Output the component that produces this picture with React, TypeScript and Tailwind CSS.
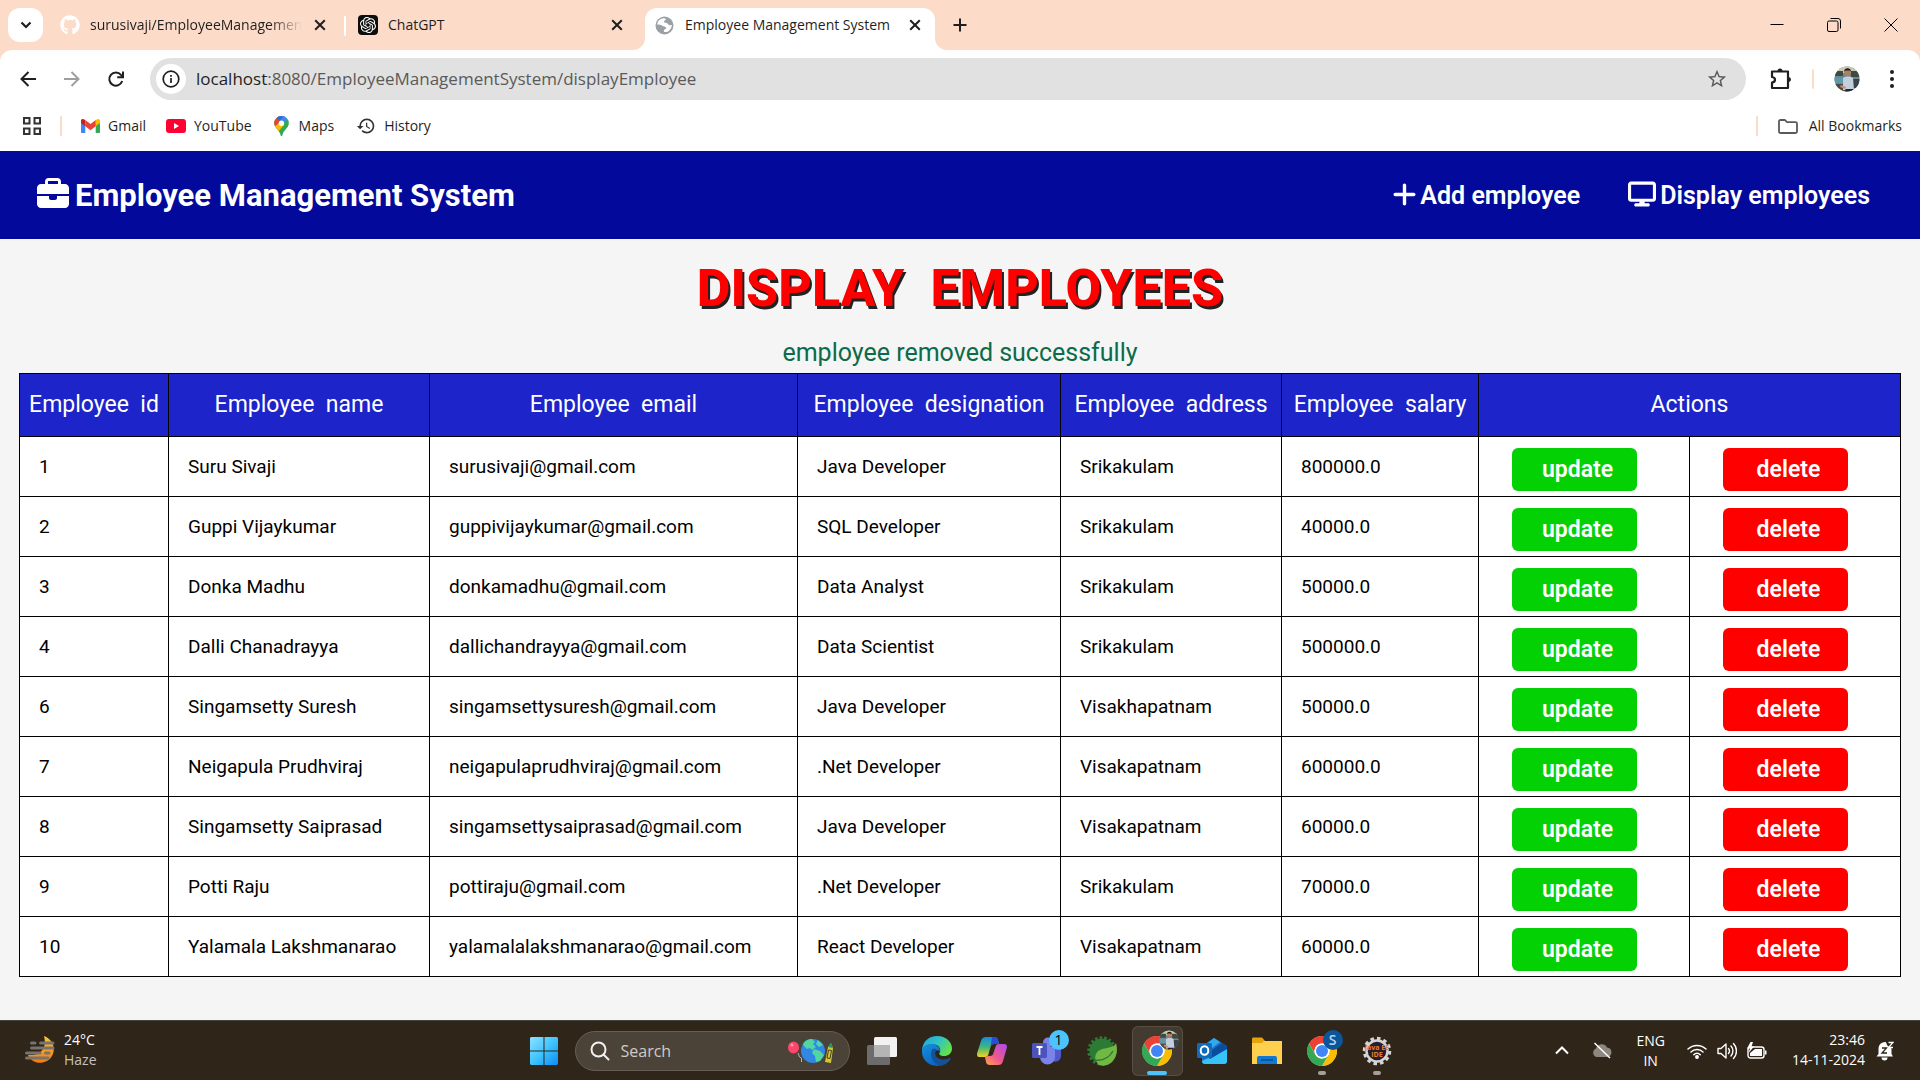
import React from "react";
import { FaBriefcase, FaDisplay, FaGithub, FaPlus } from "react-icons/fa6";
import { SiOpenai } from "react-icons/si";
import { MdHistory, MdStarBorder } from "react-icons/md";

type Employee = {
  id: number;
  name: string;
  email: string;
  designation: string;
  address: string;
  salary: string;
};

const employees: Employee[] = [
  { id: 1, name: "Suru Sivaji", email: "surusivaji@gmail.com", designation: "Java Developer", address: "Srikakulam", salary: "800000.0" },
  { id: 2, name: "Guppi Vijaykumar", email: "guppivijaykumar@gmail.com", designation: "SQL Developer", address: "Srikakulam", salary: "40000.0" },
  { id: 3, name: "Donka Madhu", email: "donkamadhu@gmail.com", designation: "Data Analyst", address: "Srikakulam", salary: "50000.0" },
  { id: 4, name: "Dalli Chanadrayya", email: "dallichandrayya@gmail.com", designation: "Data Scientist", address: "Srikakulam", salary: "500000.0" },
  { id: 6, name: "Singamsetty Suresh", email: "singamsettysuresh@gmail.com", designation: "Java Developer", address: "Visakhapatnam", salary: "50000.0" },
  { id: 7, name: "Neigapula Prudhviraj", email: "neigapulaprudhviraj@gmail.com", designation: ".Net Developer", address: "Visakapatnam", salary: "600000.0" },
  { id: 8, name: "Singamsetty Saiprasad", email: "singamsettysaiprasad@gmail.com", designation: "Java Developer", address: "Visakapatnam", salary: "60000.0" },
  { id: 9, name: "Potti Raju", email: "pottiraju@gmail.com", designation: ".Net Developer", address: "Srikakulam", salary: "70000.0" },
  { id: 10, name: "Yalamala Lakshmanarao", email: "yalamalalakshmanarao@gmail.com", designation: "React Developer", address: "Visakapatnam", salary: "60000.0" },
];

function CloseIcon() {
  return (
    <svg width="12" height="12" viewBox="0 0 12 12" fill="none" stroke="#1f1f1f" strokeWidth="2" aria-hidden="true">
      <path d="M1.2 1.2l9.6 9.6M10.8 1.2L1.2 10.8" />
    </svg>
  );
}

function CloseButton({ label }: { label: string }) {
  return (
    <button type="button" aria-label={label} className="flex size-5 shrink-0 items-center justify-center">
      <CloseIcon />
    </button>
  );
}

function TabStrip() {
  return (
    <div className="flex h-[50px] items-stretch bg-[#fcdbc9]">
      <div className="flex items-center pl-2">
        <button type="button" aria-label="Search tabs" className="flex h-[34px] w-[35px] items-center justify-center rounded-xl bg-white">
          <svg width="12" height="8" viewBox="0 0 12 8" fill="none" stroke="#1f1f1f" strokeWidth="2.2" aria-hidden="true">
            <path d="M1.5 1.5L6 6l4.500-4.500" />
          </svg>
        </button>
      </div>
      <div className="flex w-[301px] items-center pr-[14px] pl-[17px]">
        <FaGithub className="size-5 shrink-0 text-white" aria-hidden="true" />
        <a href="#github" className="ml-[10px] min-w-0 flex-1 [mask-image:linear-gradient(to_right,black_85%,transparent)] text-sm whitespace-nowrap text-[#1f1f1f]">
          surusivaji/EmployeeManagemen
        </a>
        <span className="ml-2 flex">
          <CloseButton label="Close GitHub tab" />
        </span>
      </div>
      <div className="mt-4 h-5 w-[2px] rounded bg-white" />
      <div className="flex w-[299px] items-center pr-[18px] pl-3">
        <span className="flex size-5 items-center justify-center rounded bg-[#0d0d0d]">
          <SiOpenai className="size-4 text-white" aria-hidden="true" />
        </span>
        <a href="#chatgpt" className="ml-[10px] flex-1 text-sm text-[#1f1f1f]">ChatGPT</a>
        <CloseButton label="Close ChatGPT tab" />
      </div>
      <div className="relative mt-2 flex w-[290px] items-center rounded-t-xl bg-white pr-[10px] pb-2 pl-[10px]">
        <svg className="absolute bottom-0 -left-3" width="12" height="12" viewBox="0 0 12 12" aria-hidden="true">
          <path d="M12 0v12H0A12 12 0 0 0 12 0z" fill="#fff" />
        </svg>
        <svg className="absolute -right-3 bottom-0" width="12" height="12" viewBox="0 0 12 12" aria-hidden="true">
          <path d="M0 0v12h12A12 12 0 0 1 0 0z" fill="#fff" />
        </svg>
        <svg width="19" height="19" viewBox="0 0 19 19" aria-hidden="true">
          <circle cx="9.500" cy="9.500" r="9" fill="#9aa0a6" />
          <path d="M3 5.500C5.500 2 9 1.800 11 3c-.5 1.800-2 1.500-2.300 3 1 1 3.500.6 4.600 2.200.8 1.300 2.700 1 3.600.8-.2 3-2 5.500-4.700 6.900-1.700.3-3.200.2-3.400-1 .2-1.700 2.200-1.400 2.400-2.800.2-1.700-2.700-1.400-4.100-2.400C5.800 8.700 4.400 8.500 2 8.500z" fill="#fff" />
        </svg>
        <a href="#employees" className="ml-[11px] flex-1 text-sm whitespace-nowrap text-[#1f1f1f]">Employee Management System</a>
        <CloseButton label="Close Employee Management System tab" />
      </div>
      <button type="button" aria-label="New tab" className="ml-[18px] flex w-[14px] items-center justify-center">
        <svg width="14" height="14" viewBox="0 0 14 14" fill="none" stroke="#1f1f1f" strokeWidth="2" aria-hidden="true">
          <path d="M7 0.500v13M0.500 7h13" />
        </svg>
      </button>
      <div className="ml-auto flex pr-px">
        <button type="button" aria-label="Minimize" className="flex w-[57px] items-center justify-center">
          <svg width="14" height="14" viewBox="0 0 14 14" stroke="#000" aria-hidden="true"><path d="M0.500 6.500h13" /></svg>
        </button>
        <button type="button" aria-label="Restore" className="flex w-[57px] items-center justify-center">
          <svg width="14" height="14" viewBox="0 0 14 14" fill="none" stroke="#000" aria-hidden="true">
            <rect x="0.500" y="3" width="10.500" height="10.500" rx="1.500" />
            <path d="M3.500 0.500h7.500a2.500 2.500 0 0 1 2.500 2.500v7.500" />
          </svg>
        </button>
        <button type="button" aria-label="Close window" className="flex w-[57px] items-center justify-center">
          <svg width="14" height="14" viewBox="0 0 14 14" stroke="#000" aria-hidden="true"><path d="M0.500 0.500l13 13M13.500 0.500l-13 13" /></svg>
        </button>
      </div>
    </div>
  );
}

function Avatar({ id, className }: { id: string; className: string }) {
  return (
    <svg className={className} viewBox="0 0 26 26" aria-hidden="true">
      <clipPath id={id}><circle cx="13" cy="13" r="12.500" /></clipPath>
      <g clipPath={`url(#${id})`}>
        <rect width="26" height="26" fill="#6f8792" />
        <rect width="26" height="7" fill="#c6cbb0" />
        <path d="M0 5h9v5H0zM17 5h9v6h-9z" fill="#3d4a3d" />
        <path d="M0 12h10v5H0z" fill="#5f9aa8" />
        <path d="M0 18h12v8H0z" fill="#4b4a45" />
        <path d="M18 13h8v9h-8z" fill="#394349" />
        <path d="M9 12c2-2 8-2 10 0l1 12H9z" fill="#c3cfdd" />
        <path d="M7 19l5 2-1 2-5-2z" fill="#c28e6d" />
        <circle cx="13.500" cy="6.500" r="3.200" fill="#b37d5e" />
        <path d="M10 6c-.3-5 7.500-5 7 0l-1-1.500h-5z" fill="#1c1a1a" />
        <path d="M11.500 23h8v3h-8z" fill="#23262b" />
      </g>
    </svg>
  );
}

function Toolbar() {
  return (
    <div className="bg-[#fcdbc9]">
      <div className="flex h-[58px] items-center rounded-t-xl bg-white pr-5 pl-[18px]">
        <div className="flex items-center gap-6">
          <button type="button" aria-label="Back" className="flex size-5 items-center justify-center">
            <svg width="16" height="16" viewBox="0 0 16 16" fill="none" stroke="#1f1f1f" strokeWidth="2" aria-hidden="true"><path d="M8.500 1L1.500 8l7 7M1.500 8H16" /></svg>
          </button>
          <button type="button" aria-label="Forward" className="flex size-5 items-center justify-center">
            <svg width="16" height="16" viewBox="0 0 16 16" fill="none" stroke="#9e9e9e" strokeWidth="2" aria-hidden="true"><path d="M7.500 1l7 7-7 7M14.500 8H0" /></svg>
          </button>
          <button type="button" aria-label="Reload" className="flex size-5 items-center justify-center">
            <svg width="18" height="18" viewBox="0 0 18 18" fill="none" stroke="#1f1f1f" strokeWidth="2" aria-hidden="true">
              <path d="M15.200 11A6.600 6.600 0 1 1 14 4.800L16 7" />
              <path d="M16 1.500v5.800h-5.800" />
            </svg>
          </button>
        </div>
        <div className="ml-6 flex h-[42px] min-w-0 flex-1 items-center rounded-full bg-[#e1e1e1] pr-[18px] pl-[6px]">
          <button type="button" aria-label="Site information" className="flex size-[30px] shrink-0 items-center justify-center rounded-full bg-white">
            <svg width="18" height="18" viewBox="0 0 18 18" fill="none" stroke="#1f1f1f" strokeWidth="1.700" aria-hidden="true">
              <circle cx="9" cy="9" r="7.800" />
              <path d="M9 8v5M9 5v1.800" />
            </svg>
          </button>
          <div className="relative ml-[10px] h-6 min-w-0 flex-1 text-[17px] leading-6">
            <input aria-label="Address" defaultValue="localhost:8080/EmployeeManagementSystem/displayEmployee" className="w-full bg-transparent text-[#5a5a5a] outline-none" />
            <span aria-hidden="true" className="pointer-events-none absolute top-0 left-0 bg-[#e1e1e1] text-[#1f1f1f]">localhost</span>
          </div>
          <button type="button" aria-label="Bookmark this page">
            <MdStarBorder className="size-[22px] text-[#5a5a5a]" />
          </button>
        </div>
        <div className="ml-6 flex items-center">
          <button type="button" aria-label="Extensions">
            <svg width="22" height="22" viewBox="0 0 22 22" fill="none" aria-hidden="true">
              <path d="M2 3.500h16v16.500H2v-5.500c4-.5 4-5 0-5.500z" stroke="#1f1f1f" strokeWidth="2.200" strokeLinejoin="round" />
              <path d="M7.500 3a2.500 2.500 0 0 1 5 0zM18.500 9a2.500 2.500 0 0 1 0 5z" fill="#1f1f1f" />
            </svg>
          </button>
          <div className="mx-5 h-5 w-[2px] rounded bg-[#fcdbc9]" />
          <button type="button" aria-label="Profile"><Avatar id="profile-clip" className="size-[26px]" /></button>
          <button type="button" aria-label="Browser menu" className="ml-6 flex w-4 justify-center">
            <svg width="4" height="18" viewBox="0 0 4 18" fill="#1f1f1f" aria-hidden="true"><circle cx="2" cy="2" r="2" /><circle cx="2" cy="9" r="2" /><circle cx="2" cy="16" r="2" /></svg>
          </button>
        </div>
      </div>
    </div>
  );
}

function BookmarksBar() {
  return (
    <div className="flex h-[43px] items-center bg-white pr-[18px] pb-[7px] pl-[23px] text-sm text-[#1f1f1f]">
      <button type="button" aria-label="Apps">
        <svg width="18" height="18" viewBox="0 0 18 18" fill="none" stroke="#333" strokeWidth="2" aria-hidden="true">
          <path d="M1 1h5.500v5.500H1zM11.500 1H17v5.500h-5.500zM1 11.500h5.500V17H1zM11.500 11.500H17V17h-5.500z" />
        </svg>
      </button>
      <div className="ml-[19px] h-5 w-[2px] rounded bg-[#fcdbc9]" />
      <a href="#gmail" className="ml-[19px] flex items-center gap-2">
        <svg width="19" height="14" viewBox="0 0 19 14" aria-hidden="true">
          <path d="M0 1.500V13c0 .6.400 1 1 1h3.300V5z" fill="#4285f4" />
          <path d="M19 1.500V13c0 .6-.4 1-1 1h-3.300V5z" fill="#34a853" />
          <path d="M14.700 1L17 .1c1-.2 2 .6 2 1.600V4l-4.300 3.300z" fill="#fbbc04" />
          <path d="M4.300 1L2 .1C1 0 0 .7 0 1.700V4l4.300 3.300z" fill="#c5221f" />
          <path d="M4.300 1l5.200 4 5.200-4v6.300L9.500 11.200 4.300 7.300z" fill="#ea4335" />
        </svg>
        Gmail
      </a>
      <a href="#youtube" className="ml-5 flex items-center gap-2">
        <svg width="20" height="14" viewBox="0 0 20 14" aria-hidden="true"><rect width="20" height="14" rx="3" fill="#ff0033" /><path d="M8 4l5 3-5 3z" fill="#fff" /></svg>
        YouTube
      </a>
      <a href="#maps" className="ml-[22px] flex items-center gap-[10px]">
        <svg width="15" height="20" viewBox="0 0 15 20" aria-hidden="true">
          <clipPath id="map-pin"><path d="M7.500 0A7.300 7.300 0 0 1 14.800 7.300c0 5-5.300 6.500-6.500 12.100-.2.800-1.400.8-1.600 0C5.500 13.800.2 12.300.2 7.300A7.300 7.300 0 0 1 7.500 0z" /></clipPath>
          <g clipPath="url(#map-pin)">
            <rect width="15" height="20" fill="#34a853" />
            <path d="M0 0h10L2 10l-2-1z" fill="#ea4335" />
            <path d="M2.500 2L6 5 15-3H4z" fill="#1a73e8" />
            <path d="M9 0h6v6l-3-2-4 5-3-2z" fill="#4285f4" />
            <path d="M5 7l-5 4 3 6 7-8z" fill="#fbbc04" />
          </g>
          <circle cx="7.500" cy="7.300" r="2.700" fill="#fff" />
        </svg>
        Maps
      </a>
      <a href="#history" className="ml-[22px] flex items-center gap-2">
        <MdHistory className="size-5 text-[#333]" aria-hidden="true" />
        History
      </a>
      <div className="ml-auto h-5 w-[2px] rounded bg-[#fcdbc9]" />
      <a href="#bookmarks" className="ml-5 flex items-center gap-[11px]">
        <svg width="20" height="15" viewBox="0 0 20 15" fill="none" stroke="#5a5a5a" strokeWidth="1.800" strokeLinejoin="round" aria-hidden="true">
          <path d="M1 12.500v-10C1 1.500 1.500 1 2.500 1H7l2 2.200h8.500c1 0 1.500.5 1.500 1.500v7.800c0 1-.5 1.500-1.500 1.500h-15C1.500 14 1 13.500 1 12.500z" />
        </svg>
        All Bookmarks
      </a>
    </div>
  );
}

function SiteHeader() {
  return (
    <header className="flex h-[88px] items-center justify-between bg-[#030a9b] pt-[2px] pr-[50px] pl-[37px] text-white">
      <a href="#home" className="flex items-center gap-[6px] text-[31px] leading-10 font-bold">
        <FaBriefcase className="mb-1 size-8" aria-hidden="true" />
        Employee Management System
      </a>
      <nav className="flex items-center gap-12 text-[25px] leading-8 font-semibold">
        <a href="#add" className="flex items-center gap-[2px]">
          <FaPlus className="mb-1 size-[27px]" aria-hidden="true" />
          Add employee
        </a>
        <a href="#display" className="flex items-center gap-1">
          <FaDisplay className="mb-1 size-7" aria-hidden="true" />
          Display employees
        </a>
      </nav>
    </header>
  );
}

function EmployeeTable() {
  const head = "h-[63px] border border-black pt-px text-[23px] font-normal whitespace-pre";
  const cell = "border border-black bg-white pt-[2px] pl-[19px] text-[19px] text-black";
  const action = "mt-[5px] ml-[33px] flex h-[43px] w-[125px] items-center justify-center rounded-md pt-[2px] pl-[6px] text-[23px] font-semibold text-white";
  return (
    <table className="w-full table-fixed border-collapse">
      <colgroup>
        <col className="w-[149px]" />
        <col className="w-[261px]" />
        <col className="w-[368px]" />
        <col className="w-[263px]" />
        <col className="w-[221px]" />
        <col className="w-[197px]" />
        <col className="w-[211px]" />
        <col className="w-[211px]" />
      </colgroup>
      <thead className="bg-[#1d24ca] text-white">
        <tr>
          <th scope="col" className={head}>{"Employee  id"}</th>
          <th scope="col" className={head}>{"Employee  name"}</th>
          <th scope="col" className={head}>{"Employee  email"}</th>
          <th scope="col" className={head}>{"Employee  designation"}</th>
          <th scope="col" className={head}>{"Employee  address"}</th>
          <th scope="col" className={head}>{"Employee  salary"}</th>
          <th scope="colgroup" colSpan={2} className={head}>Actions</th>
        </tr>
      </thead>
      <tbody>
        {employees.map((e) => (
          <tr key={e.id} className="h-[60px]">
            <td className={cell}>{e.id}</td>
            <td className={cell}>{e.name}</td>
            <td className={cell}>{e.email}</td>
            <td className={cell}>{e.designation}</td>
            <td className={cell}>{e.address}</td>
            <td className={cell}>{e.salary}</td>
            <td className="border border-black bg-white"><button type="button" className={`${action} bg-[#04d104]`}>update</button></td>
            <td className="border border-black bg-white"><button type="button" className={`${action} bg-[#ff0000]`}>delete</button></td>
          </tr>
        ))}
      </tbody>
    </table>
  );
}

function TaskButton({ label, active, running, children }: { label: string; active?: boolean; running?: boolean; children: React.ReactNode }) {
  return (
    <button
      type="button"
      aria-label={label}
      className={`relative mx-[2px] flex h-[50px] w-[51px] items-center justify-center rounded-md border ${active ? "border-white/10 bg-white/10" : "border-transparent"}`}
    >
      {children}
      {active && <span className="absolute bottom-0 h-1 w-5 rounded-full bg-[#4cc2ff]" />}
      {running && <span className="absolute bottom-0 h-1 w-2 rounded-full bg-[#a3a09b]" />}
    </button>
  );
}

function ChromeLogo() {
  return (
    <svg width="30" height="30" viewBox="0 0 48 48" aria-hidden="true">
      <circle cx="24" cy="24" r="23.500" fill="#fff" />
      <path d="M3.200 12a24 24 0 0 1 41.600 0H24a12 12 0 0 0-10.400 18z" fill="#ea4335" />
      <path d="M44.800 12A24 24 0 0 1 24 48l10.400-18A12 12 0 0 0 24 12z" fill="#fbbc04" />
      <path d="M24 48A24 24 0 0 1 3.200 12l10.400 18A12 12 0 0 0 34.400 30z" fill="#34a853" />
      <circle cx="24" cy="24" r="12" fill="#fff" />
      <circle cx="24" cy="24" r="9.600" fill="#4285f4" />
    </svg>
  );
}

function EdgeLogo() {
  return (
    <svg width="30" height="30" viewBox="0 0 30 30" aria-hidden="true">
      <defs>
        <linearGradient id="edge-top" x1="0" y1="0" x2="1" y2="0.500"><stop offset="0" stopColor="#1fa5e0" /><stop offset="0.550" stopColor="#2fc3c5" /><stop offset="1" stopColor="#63e04c" /></linearGradient>
        <linearGradient id="edge-body" x1="0" y1="0" x2="0.600" y2="1"><stop offset="0" stopColor="#1791dc" /><stop offset="1" stopColor="#0c62bd" /></linearGradient>
      </defs>
      <path d="M0 14C1 5 7 0 15 0c9 0 15 6 15 12.500 0 5-4 7.500-8 7.500-3.500 0-5.500-1.500-4.500-3 2-3 0-8-5-8.500C7 8 2 10.500 0 14z" fill="url(#edge-top)" />
      <path d="M0 14c1-4 5-6.500 10-6 5 .3 8 3.500 8 7-5-2-7 1-6.500 4.500C12.500 26 18 28.500 21 28.700 10 33-1 25 0 14z" fill="url(#edge-body)" />
      <path d="M10.500 13c-3 4-1.500 13.500 7 16.700 5 0 9-3 11-7 .3-.7-.4-1-.9-.7C23 24.500 15 24 13.500 19c-.7-2.300 0-4 1.500-5-1.500-1.300-3.500-1.500-4.500-1z" fill="#12529b" />
    </svg>
  );
}

function Taskbar() {
  return (
    <footer className="grid h-[60px] grid-cols-[1fr_auto_1fr] items-center border-t border-[#45443a] bg-[#2f2519] text-white">
      <button type="button" className="flex items-center gap-[9px] pb-[2px] pl-[25px] text-left text-sm leading-5">
        <svg width="30" height="30" viewBox="0 0 30 30" aria-hidden="true">
          <defs><linearGradient id="haze-moon" x1="0" y1="0" x2="0" y2="1"><stop offset="0" stopColor="#fbc53a" /><stop offset="1" stopColor="#f27a12" /></linearGradient></defs>
          <path d="M19 1c13 5 12 20 3 25-8 4-16 1-19-6 9 1 20-4 16-19z" fill="url(#haze-moon)" />
          <path d="M6.500 8h3.500M15.500 8H28M6.500 13H28M1.500 18H15M20.500 18H24M1.500 23H23" stroke="#77736e" strokeWidth="3" strokeLinecap="round" />
        </svg>
        <span>24°C<br /><span className="text-[#c5c0bb]">Haze</span></span>
      </button>

      <div className="flex items-center pl-[13px]">
        <button type="button" aria-label="Start" className="mr-4">
          <svg width="30" height="30" viewBox="0 0 30 30" aria-hidden="true">
            <defs><linearGradient id="start-fill" x1="0" y1="0" x2="1" y2="1"><stop offset="0" stopColor="#8be3ff" /><stop offset="0.500" stopColor="#40c4ff" /><stop offset="1" stopColor="#0a8df5" /></linearGradient></defs>
            <path d="M2 1h12.500v13.500H1V2zM15.500 1H28l1 1v12.500H15.500zM1 15.500h13.500V29H2l-1-1zM15.500 15.500H29V28l-1 1H15.500z" fill="url(#start-fill)" />
          </svg>
        </button>
        <div className="mr-[5px] flex h-10 w-[275px] items-center rounded-full border border-[#665e54] bg-[#4c4338] pr-[14px] pl-[14px]">
          <svg width="20" height="20" viewBox="0 0 20 20" fill="none" stroke="#f2f0ee" strokeWidth="2" aria-hidden="true"><circle cx="8.500" cy="8.500" r="7" /><path d="M13.500 13.500L18.500 18.500" strokeLinecap="round" /></svg>
          <input type="search" aria-label="Search" placeholder="Search" className="ml-[11px] min-w-0 flex-1 bg-transparent text-base text-white outline-none placeholder:text-[#cfcac4]" />
          <svg width="48" height="26" viewBox="0 0 48 26" aria-hidden="true">
            <ellipse cx="6.500" cy="9.500" rx="5.500" ry="6" fill="#ff4569" />
            <circle cx="5" cy="7" r="1.500" fill="#ff9eb0" />
            <path d="M11 15l1.500 4 2 1v4" stroke="#b9aeb0" fill="none" />
            <circle cx="26" cy="13" r="12" fill="#3286e4" />
            <path d="M16 6c2-4 6-5 9-5l3 3-2 2 3 3-4 3-2-2-3 1-3-3zM27 11l6 2 4 4-4 6-4 1-1-6-3-3zM31 2l5 5-4 2-3-3z" fill="#4fd6a3" />
            <path d="M41 9l3-4 2 5-2 15-6-1z" fill="#d4c62f" />
            <path d="M41 9l3-4 2 5z" fill="#27906c" />
            <path d="M41.500 12l3 .5-1.500 8-3-.5z" fill="none" stroke="#453d22" />
          </svg>
        </div>
        <TaskButton label="Task view">
          <svg width="30" height="28" viewBox="0 0 30 28" aria-hidden="true">
            <rect x="0" y="8" width="23" height="20" rx="1.500" fill="#6c6c6c" />
            <rect x="7" y="0" width="23" height="20" rx="1.500" fill="#f2f2f2" />
            <path d="M7 8h16v12H7z" fill="#b5b5b5" />
          </svg>
        </TaskButton>
        <TaskButton label="Microsoft Edge"><EdgeLogo /></TaskButton>
        <TaskButton label="Copilot">
          <svg width="30" height="28" viewBox="0 0 30 28" aria-hidden="true">
            <defs>
              <linearGradient id="copilot-left" x1="0" y1="0" x2="0" y2="1"><stop offset="0" stopColor="#1889e8" /><stop offset="0.500" stopColor="#3fb77b" /><stop offset="1" stopColor="#f7d21f" /></linearGradient>
              <linearGradient id="copilot-right" x1="1" y1="0" x2="0" y2="1"><stop offset="0" stopColor="#a94df0" /><stop offset="0.550" stopColor="#f0568e" /><stop offset="1" stopColor="#ffa64d" /></linearGradient>
            </defs>
            <path d="M17 0c2.500 0 3.500 1 4 3l1 4h-5c-2 0-3 1-3.500 3l-2 7c-.5 2-1.500 3-3.500 3H3c-3 0-3.500-2-2.500-5L4 4c1-3 2-4 5-4z" fill="url(#copilot-left)" />
            <path d="M15 0h2c2.500 0 3.500 1 4 3l1 4h-5c-2 0-3 1-3.500 3z" fill="#2450d8" />
            <path d="M13 28c-2.500 0-3.500-1-4-3l-1-5c2 0 3-1 3.500-3l-.5 2h2c2 0 3-1 3.500-3l2-6c.5-2 1.500-3 3.500-3h5c3 0 3.500 2 2.500 5L26 24c-1 3-2 4-5 4z" fill="url(#copilot-right)" />
          </svg>
        </TaskButton>
        <TaskButton label="Microsoft Teams">
          <svg width="30" height="28" viewBox="0 0 30 28" aria-hidden="true">
            <circle cx="16" cy="5.500" r="5" fill="#7b83eb" />
            <path d="M20 10h9v9a6 6 0 0 1-9 5z" fill="#5059c9" />
            <path d="M8 10h15v10a7.500 7.500 0 0 1-15 0z" fill="#7b83eb" />
            <rect x="0" y="6" width="15" height="15" rx="1.500" fill="#4b53bc" />
            <path d="M4.500 10h6M7.500 10v8" stroke="#fff" strokeWidth="1.800" />
          </svg>
          <span className="absolute top-[3px] right-[3px] flex size-5 items-center justify-center rounded-full bg-[#4cc2ff] text-sm text-black">1</span>
        </TaskButton>
        <TaskButton label="Spring Tool Suite">
          <svg width="30" height="30" viewBox="0 0 30 30" aria-hidden="true">
            <circle cx="15" cy="15" r="13" fill="none" stroke="#2c7b35" strokeWidth="3.500" strokeDasharray="2.500 2" />
            <circle cx="15" cy="15" r="12.500" fill="#2c7b35" />
            <path d="M29 7c-3 7-16 3-20 11-2 4 0 8 3 11C24 33 33 20 29 7z" fill="#72b944" />
            <path d="M8 24c8 1 14-2 18-9" fill="none" stroke="#2c7b35" strokeWidth="1.500" />
          </svg>
        </TaskButton>
        <TaskButton label="Google Chrome" active>
          <ChromeLogo />
          <span className="absolute top-[3px] right-[3px]"><Avatar id="task-clip" className="size-5" /></span>
        </TaskButton>
        <TaskButton label="Outlook">
          <svg width="30" height="28" viewBox="0 0 30 28" aria-hidden="true">
            <path d="M5 9L17 1l13 8v15a3 3 0 0 1-3 3H8a3 3 0 0 1-3-3z" fill="#1a6fc9" />
            <path d="M8 8l9-7 6 4-13 10z" fill="#32a9ec" />
            <path d="M30 12v12a3 3 0 0 1-3 3H8a3 3 0 0 1-3-3z" fill="#35c4f5" />
            <path d="M30 9v3L13 22 8 18l17-12z" fill="#0b4c9c" />
            <rect x="0" y="6" width="15" height="15" rx="1.500" fill="#0f6cbd" />
            <ellipse cx="7.500" cy="13.500" rx="3.800" ry="4.300" fill="none" stroke="#fff" strokeWidth="2" />
          </svg>
        </TaskButton>
        <TaskButton label="File Explorer">
          <svg width="30" height="28" viewBox="0 0 30 28" aria-hidden="true">
            <path d="M0 2c0-1 .5-1.500 1.500-1.500H10L13 4v4H0z" fill="#e5a50a" />
            <path d="M0 6h10l2-2h18v23H0z" fill="#ffd04d" />
            <path d="M5 27v-6a2 2 0 0 1 2-2h16a2 2 0 0 1 2 2v6z" fill="#1279d2" />
            <path d="M9 23h12" stroke="#0b4d90" strokeWidth="1.500" />
          </svg>
        </TaskButton>
        <TaskButton label="Google Chrome profile" running>
          <ChromeLogo />
          <span className="absolute top-[3px] right-[4px] flex size-5 items-center justify-center rounded-full bg-[#0b559a] text-sm font-semibold text-[#b7d5f0]">S</span>
        </TaskButton>
        <TaskButton label="Eclipse Java EE IDE" running>
          <svg width="30" height="30" viewBox="0 0 30 30" aria-hidden="true">
            <circle cx="15" cy="15" r="12.500" fill="none" stroke="#d4d4d4" strokeWidth="3.500" strokeDasharray="3.500 3" />
            <circle cx="15" cy="15" r="10.500" fill="#221e33" stroke="#d4d4d4" strokeWidth="2.500" />
            <text x="15" y="14" textAnchor="middle" fontSize="7" fontWeight="700" fill="#ef7d1c">Java EE</text>
            <text x="15" y="21" textAnchor="middle" fontSize="7" fontWeight="700" fill="#ef7d1c">IDE</text>
          </svg>
        </TaskButton>
      </div>

      <div className="flex items-center justify-end pr-[26px] text-sm leading-5">
        <button type="button" aria-label="Show hidden icons">
          <svg width="14" height="9" viewBox="0 0 14 9" fill="none" stroke="#fff" strokeWidth="2" aria-hidden="true"><path d="M1 7.500l6-6 6 6" /></svg>
        </button>
        <button type="button" aria-label="OneDrive" className="ml-[23px]">
          <svg width="20" height="17" viewBox="0 0 20 17" aria-hidden="true">
            <path d="M4.500 15a4.500 4.500 0 0 1-.5-8.500A6 6 0 0 1 15 5.500 4.800 4.800 0 0 1 15.500 15z" fill="#8d8780" />
            <path d="M2.500 1l15.500 15" stroke="#fff" strokeWidth="1.500" />
          </svg>
        </button>
        <button type="button" className="ml-6 text-center">ENG<br />IN</button>
        <button type="button" aria-label="Network, sound and battery" className="ml-[22px] flex items-center gap-[10px]">
          <svg width="20" height="16" viewBox="0 0 20 16" fill="none" stroke="#fff" strokeWidth="1.500" strokeLinecap="round" aria-hidden="true">
            <path d="M1 6a13 13 0 0 1 18 0M4 9a8.500 8.500 0 0 1 12 0M6.800 11.700a4.500 4.500 0 0 1 6.400 0" />
            <circle cx="10" cy="14" r="1.200" fill="#fff" />
          </svg>
          <svg width="20" height="18" viewBox="0 0 20 18" fill="none" stroke="#fff" strokeWidth="1.400" strokeLinecap="round" strokeLinejoin="round" aria-hidden="true">
            <path d="M1 6.500h3l5-4.500v14l-5-4.500H1zM11.500 6.500a4 4 0 0 1 0 5M14 4a7.500 7.500 0 0 1 0 10M16.500 1.500a11 11 0 0 1 0 15" />
          </svg>
          <svg width="20" height="18" viewBox="0 0 20 18" aria-hidden="true">
            <rect x="1" y="5" width="16" height="11" rx="2.500" fill="none" stroke="#fff" strokeWidth="1.400" />
            <path d="M8 7h7v7H3v-3z" fill="#fff" />
            <path d="M18 8.500h1.500v4H18zM3.500 0L0 6.500h3L1.500 11 7 4.500H4.500L6 0z" fill="#fff" />
          </svg>
        </button>
        <button type="button" className="ml-[25px] pb-[2px] text-right">23:46<br />14-11-2024</button>
        <button type="button" aria-label="Notifications" className="ml-[11px]">
          <svg width="18" height="20" viewBox="0 0 18 20" aria-hidden="true">
            <path d="M2.500 13V7a6.500 6.500 0 0 1 7-6c1 0 1 3 2 3.500 1 2 4 1 4 4V13l1.500 2.500H.5z" fill="#fff" />
            <path d="M5.500 16.500h6a3 3 0 0 1-6 0z" fill="#fff" />
            <path d="M6 7h4.500L6 12h5" fill="none" stroke="#2f2519" strokeWidth="1.300" />
            <path d="M12.500 1.500H17l-4.500 5H17" fill="none" stroke="#fff" strokeWidth="1.300" />
          </svg>
        </button>
      </div>
    </footer>
  );
}

export default function App() {
  return (
    <div className="flex min-h-screen flex-col bg-[#f5f5f5] font-['Open_Sans','Noto_Sans',sans-serif]">
      <TabStrip />
      <Toolbar />
      <BookmarksBar />
      <div className="flex flex-1 flex-col font-['Roboto',sans-serif]">
        <SiteHeader />
        <main className="px-[19px] pb-10">
          <h1 className="pt-[18px] text-center text-[52px] leading-[64px] font-extrabold whitespace-pre text-[#ff0000] [text-shadow:2px_3px_0_#222]">{"DISPLAY  EMPLOYEES"}</h1>
          <p className="mt-4 pb-1 text-center text-[25px] leading-8 text-[#0c6b48]">employee removed successfully</p>
          <EmployeeTable />
        </main>
      </div>
      <Taskbar />
    </div>
  );
}
